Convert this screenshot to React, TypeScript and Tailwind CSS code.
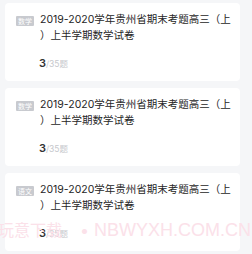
const PAPERS = [
  { subject: "数学", title: "2019-2020学年贵州省期末考题高三（上）上半学期数学试卷", done: 3, total: 35 },
  { subject: "数学", title: "2019-2020学年贵州省期末考题高三（上）上半学期数学试卷", done: 3, total: 35 },
  { subject: "语文", title: "2019-2020学年贵州省期末考题高三（上）上半学期数学试卷", done: 3, total: 35 },
]

export default function App() {
  return (
    <div className="relative h-[254px] w-[252px] overflow-hidden bg-[#f5f6f8] pl-[5px] pt-[3px] font-['Inter','Noto_Sans_CJK_SC',sans-serif]">
      <div className="flex w-[235px] flex-col gap-[7px]">
        {PAPERS.map((p, i) => (
          <PaperCard key={i} {...p} />
        ))}
      </div>

      {/* site watermark */}
      <div className="pointer-events-none absolute left-[-2px] top-[219px] flex items-center whitespace-nowrap leading-[22px] text-[#fbe1e9]">
        <span className="text-[16px]">玩意下载</span>
        <span className="ml-[18px] text-[16px]">•</span>
        <span className="ml-[5px] font-['Liberation_Sans',sans-serif] text-[18px]">NBWYXH.COM.CN</span>
      </div>
    </div>
  )
}

function PaperCard({ subject, title, done, total }: { subject: string; title: string; done: number; total: number }) {
  return (
    <div className="h-[78px] rounded-[4px] bg-white pl-[11px] pr-[4px] pt-[9px]">
      <div className="flex items-start gap-[6px]">
        <span className="mt-[4px] flex h-[10px] w-[18px] shrink-0 items-center justify-center rounded-[1px] bg-[#c8cacf] text-[7px] leading-none text-white">
          {subject}
        </span>
        <p className="flex-1 text-[10.5px] leading-[16px] text-[#262626] [line-break:anywhere]">{title}</p>
      </div>
      <div className="mt-[11px] pl-[23px] text-[11px] leading-[16px]">
        <span className="font-semibold text-[#333]">{done}</span>
        <span className="text-[8.5px] text-[#c6c8cc]">/{total}题</span>
      </div>
    </div>
  )
}
